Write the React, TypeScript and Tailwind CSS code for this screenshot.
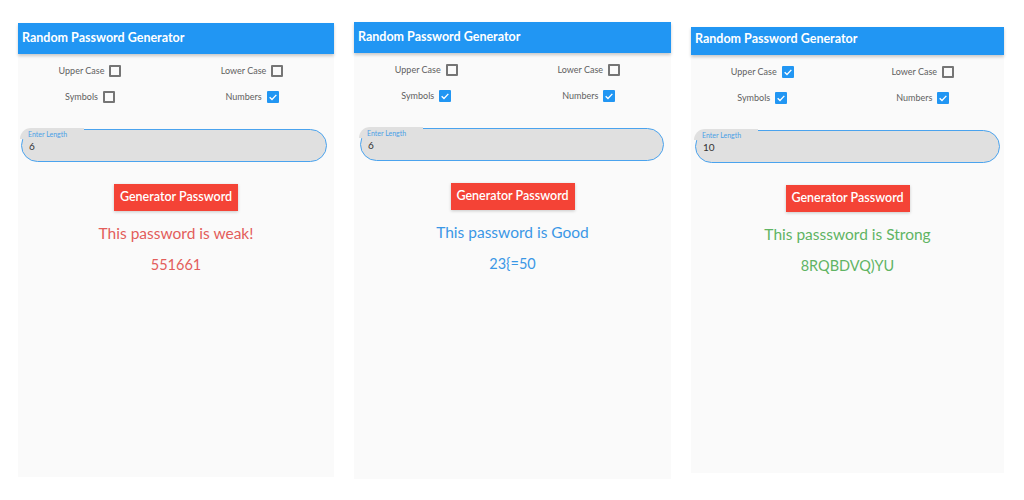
import React from 'react'

interface Screen {
  upper: boolean
  lower: boolean
  symbols: boolean
  numbers: boolean
  length: string
  message: string
  password: string
  color: string
  top: string
  barHeight: string
  width: string
  height: string
  field: string
}

const screens: Screen[] = [
  {
    upper: false,
    lower: false,
    symbols: false,
    numbers: true,
    length: '6',
    message: 'This password is weak!',
    password: '551661',
    color: 'text-[#e35d5b]',
    top: 'mt-[23px]',
    barHeight: 'h-[31px] pt-0',
    width: 'w-[316px]',
    height: 'h-[454px]',
    field: 'ml-[3px] mr-[7px]',
  },
  {
    upper: false,
    lower: false,
    symbols: true,
    numbers: true,
    length: '6',
    message: 'This password is Good',
    password: '23{=50',
    color: 'text-[#3a97e6]',
    top: 'mt-[22px]',
    barHeight: 'h-[31px] pt-0',
    width: 'w-[317px]',
    height: 'h-[457px]',
    field: 'ml-[6px] mr-[7px]',
  },
  {
    upper: true,
    lower: false,
    symbols: true,
    numbers: true,
    length: '10',
    message: 'This passsword is Strong',
    password: '8RQBDVQ)YU',
    color: 'text-[#5fb463]',
    top: 'mt-[27px]',
    barHeight: 'h-[28px] pb-[4px]',
    width: 'w-[313px]',
    height: 'h-[446px]',
    field: 'ml-[4px] mr-[4px]',
  },
]

function Box({ checked }: { checked: boolean }) {
  if (checked) {
    return (
      <span className="flex h-[12px] w-[12px] items-center justify-center rounded-[1px] bg-[#2196f3]">
        <svg viewBox="0 0 12 12" className="h-[10px] w-[10px]">
          <path d="M2 6.2 L4.8 9 L10 3.4" fill="none" stroke="white" strokeWidth="1.6" />
        </svg>
      </span>
    )
  }
  return <span className="h-[12px] w-[12px] rounded-[1px] border-2 border-[#757575]" />
}

function Option({ label, checked }: { label: string; checked: boolean }) {
  return (
    <div className="flex h-[26px] items-center justify-center gap-[5px]">
      <span className="text-[9px] text-[#5f5f5f]">{label}</span>
      <Box checked={checked} />
    </div>
  )
}

function Phone({ s }: { s: Screen }) {
  return (
    <div className={`${s.top} ${s.width} ${s.height} flex shrink-0 flex-col bg-[#fafafa]`}>
      {/* App bar */}
      <div
        className={`${s.barHeight} flex items-center bg-[#2196f3] pl-[4px] shadow-[0_2px_3px_rgba(0,0,0,0.2)]`}
      >
        <span className="text-[12.5px] font-bold text-white">Random Password Generator</span>
      </div>

      {/* Options */}
      <div className="-ml-[9px] mr-[1px] grid grid-cols-2 pt-[4px]">
        <Option label="Upper Case" checked={s.upper} />
        <Option label="Lower Case" checked={s.lower} />
        <Option label="Symbols" checked={s.symbols} />
        <Option label="Numbers" checked={s.numbers} />
      </div>

      {/* Length field */}
      <div
        className={`${s.field} relative mt-[19px] h-[33px] rounded-[17px] border-[1.5px] border-[#4aa3ee] bg-[#e0e0e0] pl-[7px] pt-[9px] text-[10px] leading-[14px]`}
      >
        <div className="absolute -left-[2px] -top-[2px] h-[11px] w-[64px] rounded-tl-[17px] bg-[#e0e0e0]" />
        <div className="absolute left-[6px] top-[-1px] text-[7px] leading-[10px] text-[#4a9fe6]">
          Enter Length
        </div>
        <div className="relative text-[#333333]">{s.length}</div>
      </div>

      {/* Button */}
      <div className="mt-[22px] flex justify-center">
        <button className="h-[27px] w-[124px] bg-[#f44336] text-[12.5px] font-semibold text-white shadow-[0_1px_3px_rgba(0,0,0,0.2)]">
          Generator Password
        </button>
      </div>

      <div className={`mt-[12px] text-center text-[15.5px] leading-[20px] ${s.color}`}>{s.message}</div>
      <div className={`mt-[12px] text-center text-[14.5px] leading-[20px] ${s.color}`}>{s.password}</div>
    </div>
  )
}

export default function App() {
  return (
    <div
      className="flex h-[500px] w-[1024px] items-start gap-[20px] bg-white pl-[18px]"
      style={{ fontFamily: 'Lato, "Open Sans", sans-serif' }}
    >
      {screens.map((s, i) => (
        <Phone key={i} s={s} />
      ))}
    </div>
  )
}
